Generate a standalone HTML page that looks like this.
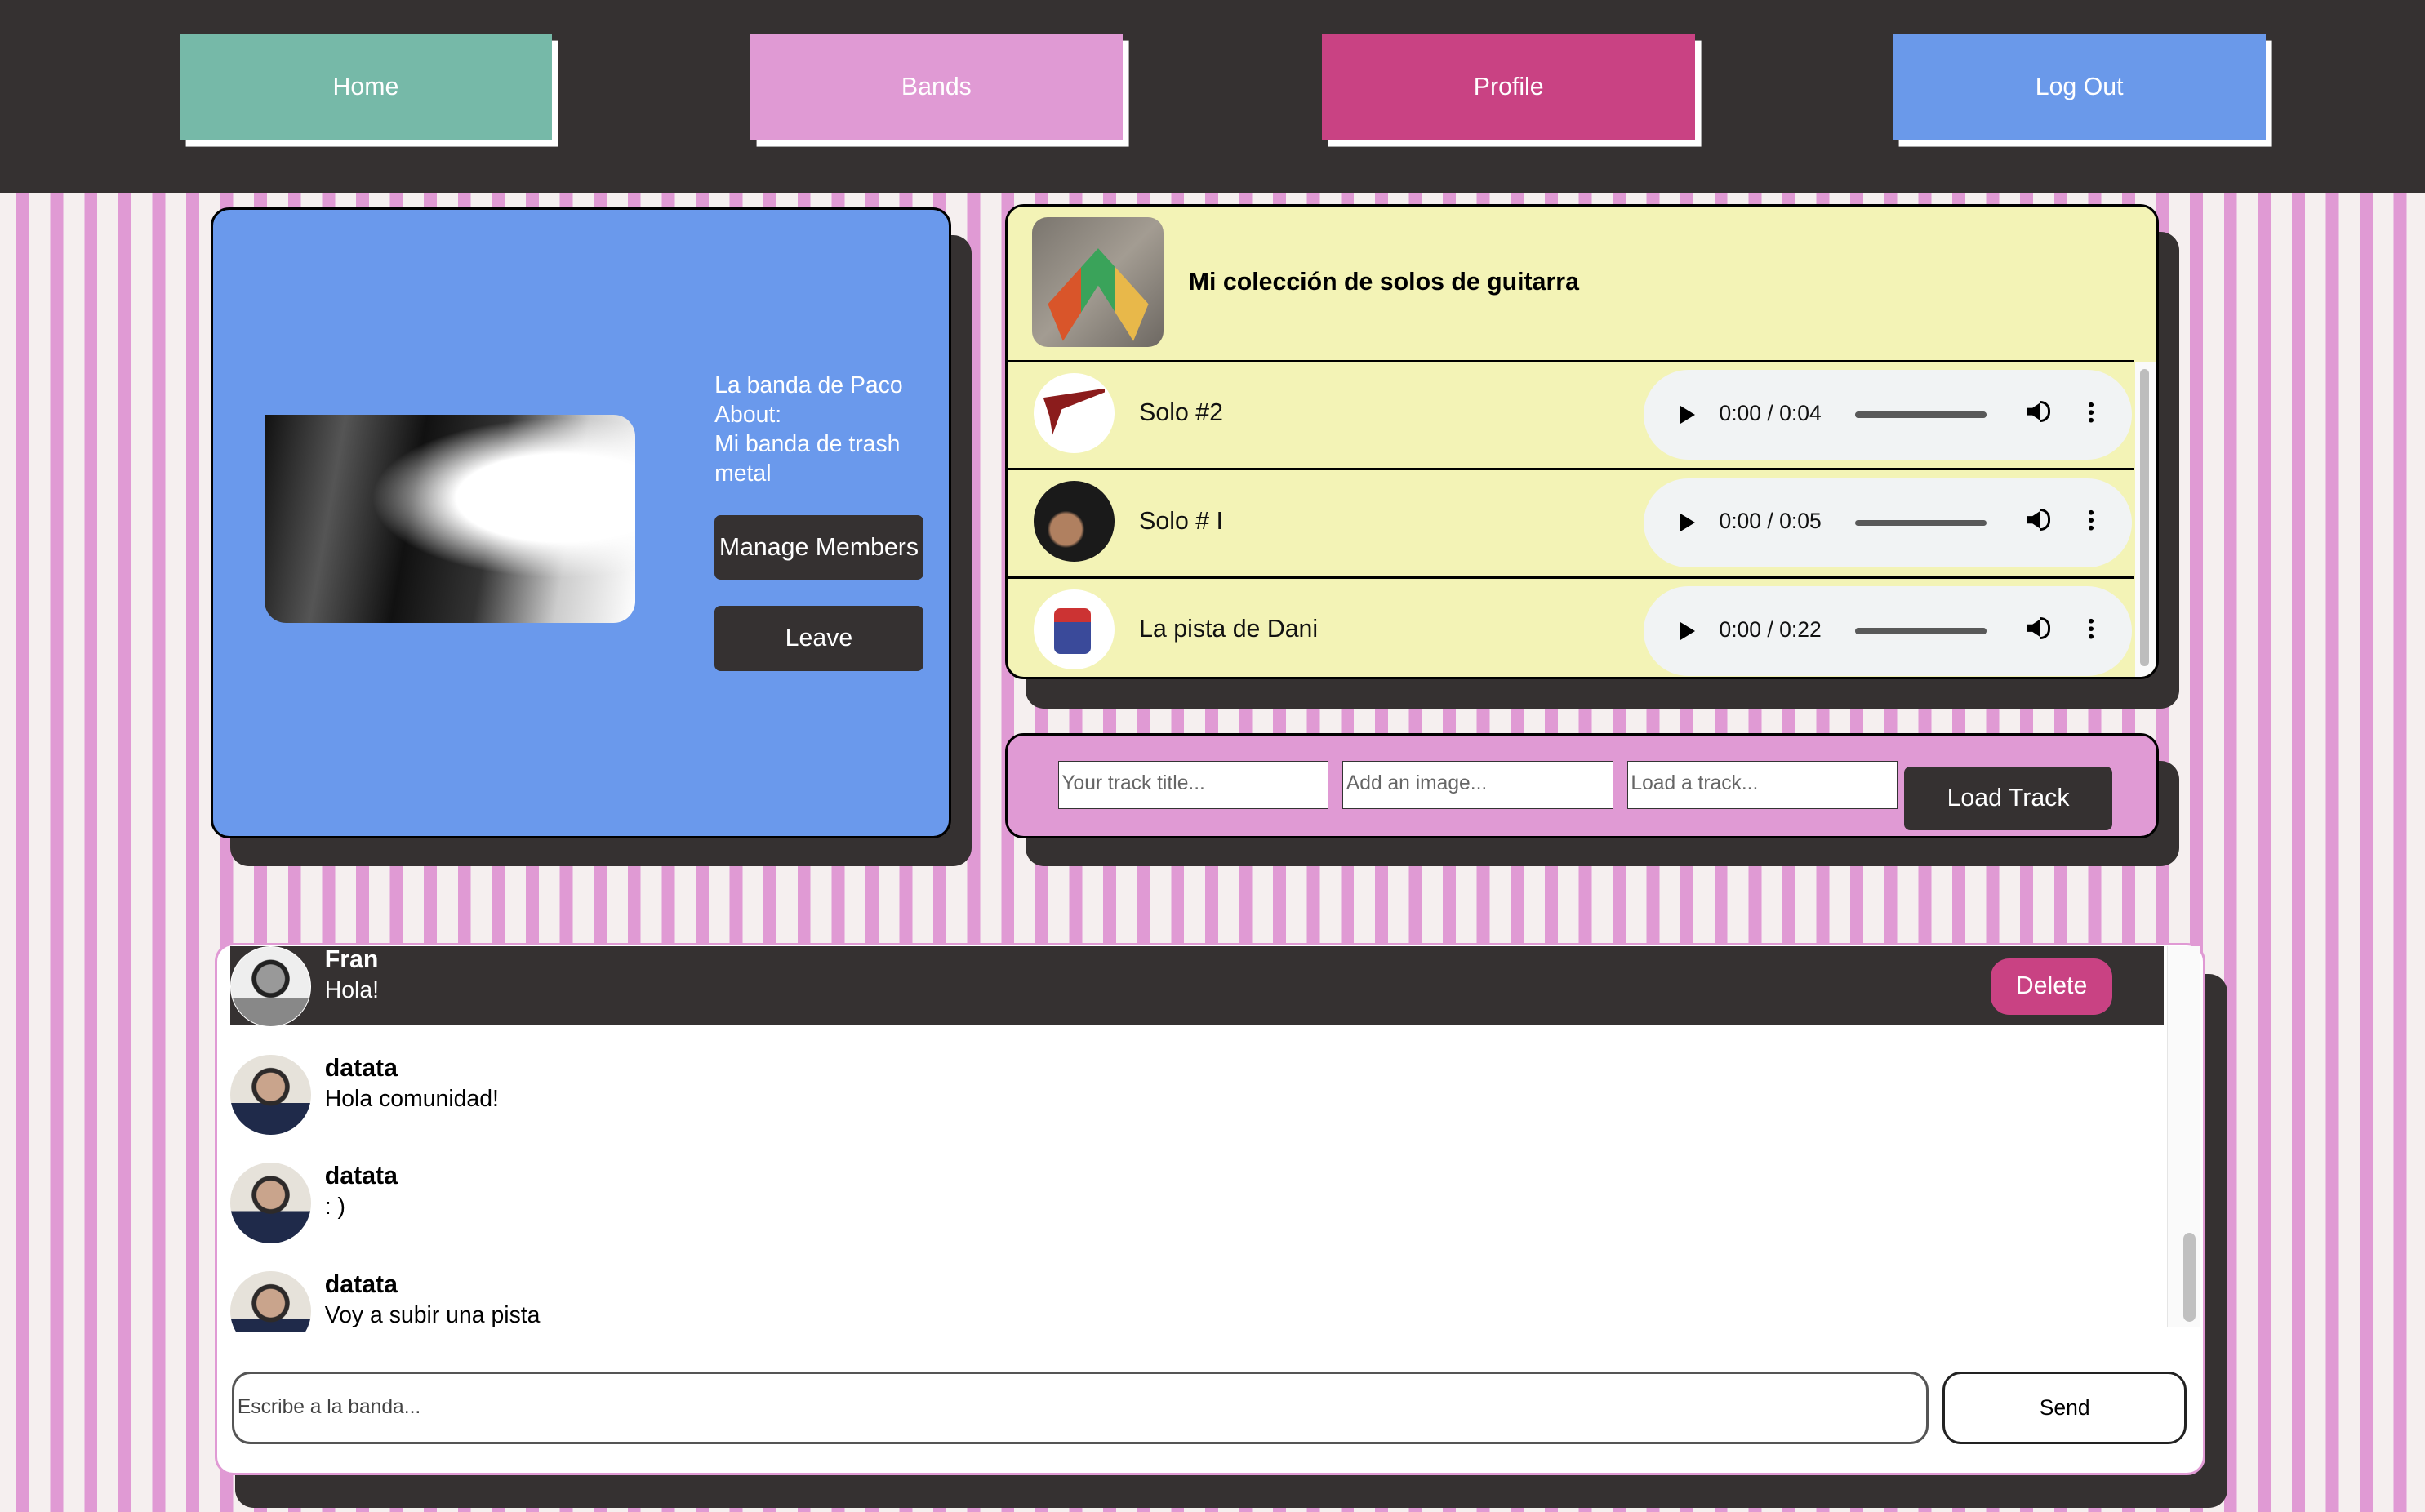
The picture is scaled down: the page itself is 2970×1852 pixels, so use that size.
<!DOCTYPE html>
<html><head><meta charset="utf-8"><style>
*{box-sizing:border-box;margin:0;padding:0}
html,body{width:2970px;height:1852px;overflow:hidden}
body{font-family:"Liberation Sans",sans-serif;}
#w{zoom:1.89413;position:relative;width:1568px;height:978px;overflow:hidden;
background:repeating-linear-gradient(90deg,#f5efef 0 10.6px,#e09ad4 10.6px 19px,#f5efef 19px 21.96px);}
.a{position:absolute}
.nav{left:0;top:0;width:1568px;height:125px;background:#353131}
.nb{position:absolute;top:22px;width:241px;height:69px;color:#fff;font-size:16px;display:flex;align-items:center;justify-content:center;box-shadow:4px 4px 0 #fff}
.dk{background:#353131}
.btn{position:absolute;background:#353131;color:#fff;border-radius:4px;display:flex;align-items:center;justify-content:center;font-size:16px}
.row{position:absolute;left:0;width:728px;height:70px;border-top:2px solid #000}
.row .th{position:absolute;left:17px;top:7px;width:52px;height:52px;border-radius:50%;background:#fff;overflow:hidden}
.row .t{position:absolute;left:85px;top:24px;font-size:16px;color:#111}
.aud{position:absolute;left:411px;top:5px;width:316px;height:58px;background:#f1f3f4;border-radius:29px;font-size:14px;color:#111}
.aud .p{position:absolute;left:24px;top:23px;width:0;height:0;border-left:10px solid #000;border-top:6px solid transparent;border-bottom:6px solid transparent}
.aud .tm{position:absolute;left:49px;top:20px}
.aud .bar{position:absolute;left:137px;top:27px;width:85px;height:4px;background:#595959;border-radius:2px}
.aud .v{position:absolute;left:248px;top:21px;width:9px;height:12px;background:#000;clip-path:polygon(0 30%,40% 30%,100% 0,100% 100%,40% 70%,0 70%)}
.aud .v2{position:absolute;left:257px;top:20px;width:6px;height:14px;border:2px solid #000;border-left:none;border-radius:0 8px 8px 0}
.aud .d{position:absolute;left:288px;top:20px;width:3px;height:15px;background:radial-gradient(circle,#000 1.4px,transparent 1.6px) 0 0/3px 5px}
.in{position:absolute;top:492px;width:175px;height:31px;background:#fff;border:1px solid #333;font-size:13px;color:#666;padding:7px 2px}
.msg{position:absolute;left:149px;width:1250px;height:52px}
.msg .av{position:absolute;left:0;top:0;width:52px;height:52px;border-radius:50%;background:radial-gradient(circle at 50% 40%,#c9a48c 0 9px,#2d2a2a 9.5px 12px,transparent 12.5px),linear-gradient(180deg,#e6e2da 60%,#1f2a4a 60%)}
.msg .n{position:absolute;left:61px;top:0;font-weight:bold;font-size:16px}
.msg .m{position:absolute;left:61px;top:20px;font-size:15px}
</style></head><body><div id="w">
<div class="a nav"></div>
<div class="nb" style="left:116px;background:#76b9a8">Home</div>
<div class="nb" style="left:485px;background:#e09ad4">Bands</div>
<div class="nb" style="left:855px;background:#c94283">Profile</div>
<div class="nb" style="left:1224px;background:#6a99ea">Log Out</div>

<div class="a dk" style="left:149px;top:152px;width:479px;height:408px;border-radius:12px"></div>
<div class="a" style="left:136px;top:134px;width:479px;height:408px;background:#6a99ec;border:2px solid #000;border-radius:12px"></div>
<div class="a" style="left:171px;top:268px;width:240px;height:135px;border-radius:0 14px 14px 14px;overflow:hidden;background:radial-gradient(ellipse at 80% 40%,#fff 0 25%,transparent 45%),linear-gradient(100deg,#111 0%,#555 20%,#111 40%,#333 60%,#ccc 80%,#fff 100%)"></div>
<div class="a" style="left:462px;top:240px;color:#fff;font-size:15px;line-height:19px">La banda de Paco<br>About:<br>Mi banda de trash<br>metal</div>
<div class="btn" style="left:462px;top:333px;width:135px;height:42px">Manage Members</div>
<div class="btn" style="left:462px;top:392px;width:135px;height:42px">Leave</div>

<div class="a dk" style="left:663px;top:150px;width:746px;height:308px;border-radius:12px"></div>
<div class="a" style="left:650px;top:132px;width:746px;height:307px;background:#f3f3b6;border:2px solid #000;border-radius:12px;overflow:hidden">
<div class="a" style="left:16px;top:7px;width:85px;height:84px;border-radius:10px;background:linear-gradient(135deg,#7a756e,#a39c92 50%,#6d6862)"><div class="a" style="left:10px;top:20px;width:65px;height:60px;background:linear-gradient(90deg,#d9552a 0 33%,#3aa35a 33% 66%,#e8b84a 66%);clip-path:polygon(0 60%,50% 0,100% 60%,85% 100%,50% 40%,15% 100%)"></div></div>
<div class="a" style="left:117px;top:40px;font-weight:bold;font-size:16px">Mi colección de solos de guitarra</div>
<div class="row" style="top:99px"><div class="th"><div class="a" style="left:6px;top:10px;width:40px;height:30px;background:#8b1c1c;clip-path:polygon(0 20%,100% 0,100% 8%,30% 45%,15% 100%,10% 60%)"></div></div><div class="t">Solo #2</div><div class="aud"><div class="p"></div><div class="tm">0:00 / 0:04</div><div class="bar"></div><div class="v"></div><div class="v2"></div><div class="d"></div></div></div>
<div class="row" style="top:169px"><div class="th" style="background:radial-gradient(circle at 40% 60%,#b08060 0 10px,#1a1a1a 12px)"></div><div class="t">Solo # I</div><div class="aud"><div class="p"></div><div class="tm">0:00 / 0:05</div><div class="bar"></div><div class="v"></div><div class="v2"></div><div class="d"></div></div></div>
<div class="row" style="top:239px"><div class="th"><div class="a" style="left:13px;top:12px;width:24px;height:30px;background:linear-gradient(180deg,#c33 0 30%,#3a4a9a 30%);border-radius:4px"></div></div><div class="t">La pista de Dani</div><div class="aud"><div class="p"></div><div class="tm">0:00 / 0:22</div><div class="bar"></div><div class="v"></div><div class="v2"></div><div class="d"></div></div></div>
<div class="a" style="left:729px;top:101px;width:14px;height:204px;background:#fafafa"><div class="a" style="left:3px;top:4px;width:6px;height:192px;background:#bdbdbd;border-radius:3px"></div></div>
</div>

<div class="a dk" style="left:663px;top:492px;width:746px;height:68px;border-radius:12px"></div>
<div class="a" style="left:650px;top:474px;width:746px;height:68px;background:#e09ad4;border:2px solid #000;border-radius:12px"></div>
<div class="in" style="left:684px">Your track title...</div>
<div class="in" style="left:868px">Add an image...</div>
<div class="in" style="left:1052px">Load a track...</div>
<div class="btn" style="left:1231px;top:496px;width:135px;height:41px">Load Track</div>

<div class="a dk" style="left:152px;top:630px;width:1288px;height:345px;border-radius:12px"></div>
<div class="a" style="left:139px;top:610px;width:1287px;height:344px;background:#fff;border:2px solid #e09ad4;border-radius:12px"></div>
<div class="a" style="left:1401px;top:612px;width:22px;height:246px;background:#fafafa;border-left:1px solid #e5e5e5"><div class="a" style="left:10px;top:185px;width:8px;height:58px;background:#c0c0c0;border-radius:4px"></div></div>
<div class="a dk" style="left:149px;top:612px;width:1250px;height:51px"></div>
<div class="msg" style="top:612px;color:#fff"><div class="av" style="background:radial-gradient(circle at 50% 40%,#999 0 9px,#222 9.5px 12px,transparent 12.5px),linear-gradient(180deg,#eee 65%,#888 65%);border:1px solid #fff"></div><div class="n" style="top:0">Fran</div><div class="m">Hola!</div></div>
<div class="btn" style="left:1287px;top:620px;width:79px;height:36px;background:#c94283;border-radius:12px">Delete</div>
<div class="msg" style="top:682px"><div class="av"></div><div class="n">datata</div><div class="m">Hola comunidad!</div></div>
<div class="msg" style="top:752px"><div class="av"></div><div class="n">datata</div><div class="m">: )</div></div>
<div class="a" style="left:149px;top:822px;width:1250px;height:39px;overflow:hidden"><div class="msg" style="top:0;left:0"><div class="av"></div><div class="n">datata</div><div class="m">Voy a subir una pista</div></div></div>
<div class="a" style="left:150px;top:887px;width:1097px;height:47px;border:2px solid #555;border-radius:12px;font-size:13px;color:#444;padding:14px 2px">Escribe a la banda...</div>
<div class="a" style="left:1256px;top:887px;width:158px;height:47px;border:2px solid #222;border-radius:12px;font-size:14px;display:flex;align-items:center;justify-content:center">Send</div>
</div></body></html>
